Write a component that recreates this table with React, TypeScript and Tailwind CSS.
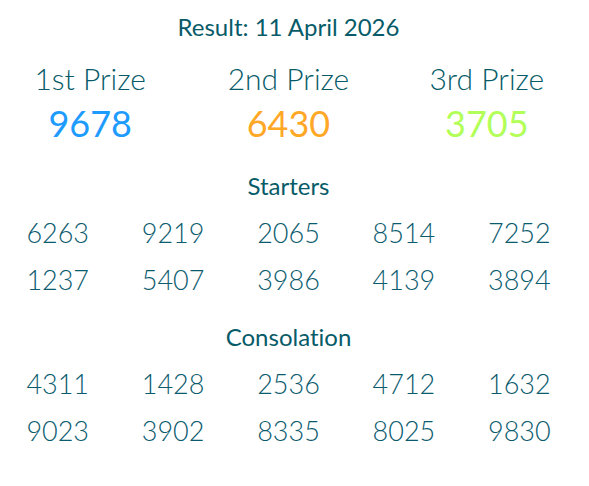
import React from 'react';

const prizes = [
  { label: '1st Prize', number: '9678', color: 'text-[#1e9bff]' },
  { label: '2nd Prize', number: '6430', color: 'text-[#ffa726]' },
  { label: '3rd Prize', number: '3705', color: 'text-[#b2ff59]' },
];

const starters = ['6263', '9219', '2065', '8514', '7252', '1237', '5407', '3986', '4139', '3894'];
const consolation = ['4311', '1428', '2536', '4712', '1632', '9023', '3902', '8335', '8025', '9830'];

const NumberGrid: React.FC<{ title: string; numbers: string[] }> = ({ title, numbers }) => (
  <div>
    <h3 className="text-center text-[24px] leading-[30px] text-[#075b68]">{title}</h3>
    <div className="mt-[16px] grid grid-cols-5 gap-y-[15px]">
      {numbers.map((n, i) => (
        <span key={i} className="text-center text-[27px] leading-[32px] font-light text-[#0b5b6e]">
          {n}
        </span>
      ))}
    </div>
  </div>
);

const App: React.FC = () => {
  return (
    <div
      className="min-h-screen bg-white [font-variant-ligatures:none]"
      style={{ fontFamily: 'Lato, "Noto Sans", sans-serif' }}
    >
      <div className="w-[577px] pt-[12px]">
        <h2 className="text-center text-[24px] leading-[30px] text-[#075b68]">Result: 11 April 2026</h2>
        <div className="mt-[18px] grid grid-cols-3 gap-x-[18px]">
          {prizes.map((p) => (
            <div key={p.label} className="flex flex-col items-center">
              <span className="text-[30px] leading-[36px] font-light text-[#075b68]">{p.label}</span>
              <span className={`mt-[5px] text-[36px] leading-[44px] ${p.color}`}>{p.number}</span>
            </div>
          ))}
        </div>
        <div className="mt-[26px] flex flex-col gap-[26px]">
          <NumberGrid title="Starters" numbers={starters} />
          <NumberGrid title="Consolation" numbers={consolation} />
        </div>
      </div>
    </div>
  );
};

export default App;
